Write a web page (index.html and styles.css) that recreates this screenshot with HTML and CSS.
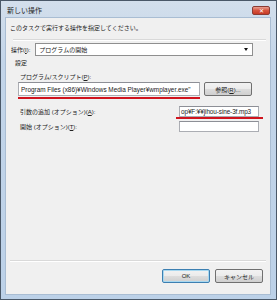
FILE: index.html
```html
<!DOCTYPE html>
<html lang="ja">
  <head>
    <meta charset="UTF-8" />
    <title>新しい操作</title>
    <link rel="stylesheet" href="styles.css">
  </head>
  <body>
    <div class="window">
      <div class="titlebar">
        <span class="title">新しい操作</span>
        <span class="close">✕</span>
      </div>
      <div class="client">
        <p class="intro">このタスクで実行する操作を指定してください。</p>
        <div class="sep top-sep"></div>
        <div class="action-row">
          <span class="lbl">操作(<u>I</u>):</span>
          <div class="combo">
            <span>プログラムの開始</span>
            <span class="arrow"></span>
          </div>
        </div>
        <div class="group-title">設定</div>
        <div class="field-label">プログラム/スクリプト(<u>P</u>):</div>
        <div class="prog-row">
          <div class="textbox prog marked">Program Files (x86)¥Windows Media Player¥wmplayer.exe"</div>
          <button class="btn browse">参照(<u>R</u>)...</button>
        </div>
        <div class="opt-row args">
          <span class="lbl">引数の追加 (オプション)(<u>A</u>):</span>
          <div class="textbox short marked wide-mark">op¥F:¥¥jihou-sine-3f.mp3</div>
        </div>
        <div class="opt-row start">
          <span class="lbl">開始 (オプション)(<u>T</u>):</span>
          <div class="textbox short"></div>
        </div>
        <div class="spacer"></div>
        <div class="sep bottom-sep"></div>
        <div class="buttons">
          <button class="btn default">OK</button>
          <button class="btn">キャンセル</button>
        </div>
      </div>
    </div>
  </body>
</html>
```

FILE: styles.css
```css
body {
  margin: 0;
  font-family: "Liberation Sans", "Noto Sans CJK JP", sans-serif;
  font-size: 6px;
  color: #222;
}
.window {
  width: 277px;
  height: 300px;
  box-sizing: border-box;
  border: 1px solid #4a5868;
  background: linear-gradient(#d3dfec, #c3d5e9 20%, #bcd1e8);
  padding: 0 5px 4px 4px;
  display: flex;
  flex-direction: column;
}
.titlebar {
  height: 16px;
  display: flex;
  justify-content: space-between;
  align-items: flex-start;
}
.title {
  font-size: 7px;
  margin: 4px 0 0 2px;
  color: #1e1e1e;
}
.close {
  width: 18px;
  height: 9px;
  margin-top: 5px;
  margin-right: 1px;
  border: 1px solid #8a3b34;
  border-radius: 2px;
  background: linear-gradient(#e8a093, #d6543f 50%, #c73a25);
  color: #fff;
  font-size: 6px;
  line-height: 9px;
  text-align: center;
  box-sizing: border-box;
}
.client {
  flex: 1;
  background: #f0f0f0;
  border: 1px solid #a9bdd3;
  display: flex;
  flex-direction: column;
}
.intro {
  margin: 5px 0 0 4px;
  line-height: 10px;
}
.sep {
  height: 1px;
  background: #d9d9d9;
  border-bottom: 1px solid #fff;
}
.top-sep {
  margin: 6px 4px 0 7px;
}
.action-row {
  margin: 2px 0 0 5px;
  height: 13px;
  display: flex;
  align-items: center;
  gap: 5px;
}
.combo {
  width: 218px;
  height: 13px;
  box-sizing: border-box;
  border: 1px solid #8f8f8f;
  background: #fff;
  display: flex;
  align-items: center;
  justify-content: space-between;
  padding: 0 4px 0 3px;
}
.arrow {
  width: 0;
  height: 0;
  border-left: 2.5px solid transparent;
  border-right: 2.5px solid transparent;
  border-top: 3px solid #111;
}
.group-title {
  margin: 3px 0 0 9px;
  line-height: 8px;
}
.field-label {
  margin: 6px 0 0 14px;
  line-height: 8px;
}
.prog-row {
  margin: 1px 0 0 12px;
  height: 14px;
  display: flex;
  gap: 4px;
}
.textbox {
  box-sizing: border-box;
  border: 1px solid #abadb3;
  border-top-color: #8d8f96;
  background: #fff;
  padding: 0 2px;
  font-size: 6.4px;
  display: flex;
  align-items: center;
  white-space: nowrap;
  overflow: hidden;
  position: relative;
}
.prog {
  width: 182px;
}
.short {
  width: 80px;
  height: 11px;
  padding: 0 1px;
  letter-spacing: -0.1px;
}
.marked {
  overflow: visible;
}
.marked::after {
  content: "";
  position: absolute;
  left: -1px;
  right: -1px;
  bottom: -4px;
  height: 2px;
  background: #d0141e;
}
.wide-mark::after {
  left: -4px;
  right: -5px;
  bottom: -3px;
}
.btn {
  font-family: inherit;
  font-size: 6px;
  color: #222;
  box-sizing: border-box;
  border: 1px solid #707070;
  border-radius: 2px;
  background: linear-gradient(#f2f2f2, #ebebeb 50%, #dddddd 51%, #cfcfcf);
  padding: 0;
}
.browse {
  width: 48px;
  height: 14px;
}
.opt-row {
  margin-left: 14px;
  display: flex;
  align-items: center;
  justify-content: space-between;
  padding-right: 11px;
}
.args {
  margin-top: 10px;
}
.start {
  margin-top: 4px;
}
.spacer {
  flex: 1;
}
.bottom-sep {
  margin: 0 4px 0 4px;
}
.buttons {
  margin-top: 7px;
  padding: 0 7px 11px 0;
  display: flex;
  justify-content: flex-end;
  gap: 5px;
}
.buttons .btn {
  width: 48px;
  height: 14px;
}
.default {
  border-color: #3c7fb1;
  box-shadow: inset 0 0 0 1px #a8d8f0;
}
```
